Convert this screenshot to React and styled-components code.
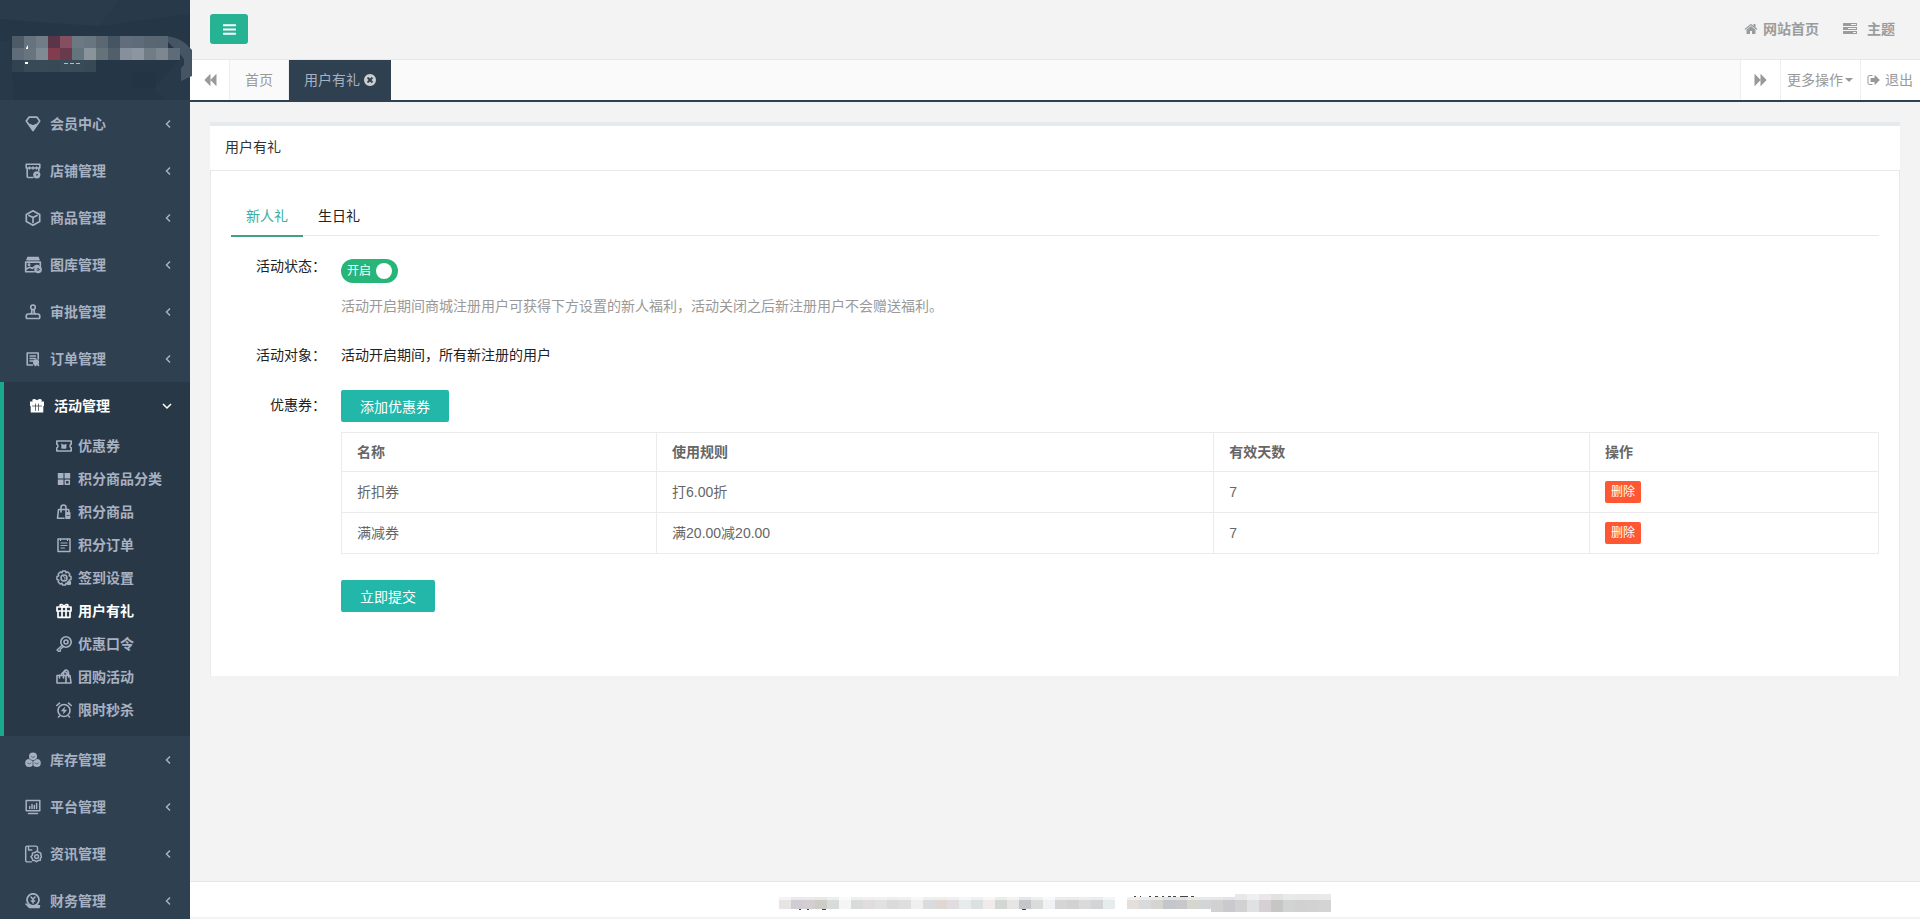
import React, { useState } from "react";
import styled, { createGlobalStyle, css } from "styled-components";

const GlobalStyle = createGlobalStyle`
  *, *::before, *::after { box-sizing: border-box; }
  html, body { margin: 0; padding: 0; }
  body {
    background: #f3f3f4;
    color: #333;
    font-family: "Liberation Sans", "Noto Sans CJK SC", sans-serif;
    font-size: 14px;
    line-height: 20px;
  }
  button, input { font: inherit; }
  button { cursor: pointer; }
  a { color: inherit; text-decoration: none; }
`;

/* ---------- icons ---------- */

const Svg = styled.svg`
  display: block;
  flex: none;
  width: ${(p) => p.$size || 16}px;
  height: ${(p) => p.$size || 16}px;
`;

const Line = ({ size, children }) => (
  <Svg
    $size={size}
    viewBox="0 0 16 16"
    fill="none"
    stroke="currentColor"
    strokeWidth="1.6"
    strokeLinejoin="round"
    strokeLinecap="round"
    aria-hidden="true"
  >
    {children}
  </Svg>
);

const Solid = ({ size, d }) => (
  <Svg $size={size} viewBox="0 0 1792 1792" fill="currentColor" aria-hidden="true">
    <path d={d} />
  </Svg>
);

const SOLID = {
  bars: "M1664 1344v128q0 26-19 45t-45 19h-1408q-26 0-45-19t-19-45v-128q0-26 19-45t45-19h1408q26 0 45 19t19 45zm0-512v128q0 26-19 45t-45 19h-1408q-26 0-45-19t-19-45v-128q0-26 19-45t45-19h1408q26 0 45 19t19 45zm0-512v128q0 26-19 45t-45 19h-1408q-26 0-45-19t-19-45v-128q0-26 19-45t45-19h1408q26 0 45 19t19 45z",
  backward:
    "M1683 141q19-19 32-13t13 32v1472q0 26-13 32t-32-13l-710-710q-9-9-13-19v710q0 26-13 32t-32-13l-710-710q-19-19-19-45t19-45l710-710q19-19 32-13t13 32v710q4-10 13-19z",
  forward:
    "M109 1651q-19 19-32 13t-13-32v-1472q0-26 13-32t32 13l710 710q9 9 13 19v-710q0-26 13-32t32 13l710 710q19 19 19 45t-19 45l-710 710q-19 19-32 13t-13-32v-710q-4 10-13 19z",
  home: "M1472 992v480q0 26-19 45t-45 19h-384v-384h-256v384h-384q-26 0-45-19t-19-45v-480q0-1 .5-3t.5-3l575-474 575 474q1 2 1 6zm223-69l-62 74q-8 9-21 11h-3q-13 0-21-7l-692-577-692 577q-12 8-24 7-13-2-21-11l-62-74q-8-10-7-23.5t11-21.5l719-599q32-26 76-26t76 26l244 204v-195q0-14 9-23t23-9h192q14 0 23 9t9 23v408l219 182q10 8 11 21.5t-7 23.5z",
  signOut:
    "M704 1440q0 4 1 20t.5 26.5-3 23.5-10 19.5-20.5 6.5h-320q-119 0-203.5-84.5t-84.5-203.5v-704q0-119 84.5-203.5t203.5-84.5h320q13 0 22.5 9.5t9.5 22.5q0 4 1 20t.5 26.5-3 23.5-10 19.5-20.5 6.5h-320q-66 0-113 47t-47 113v704q0 66 47 113t113 47h312l11.5 1 11.5 3 8 5.5 7 9 2 13.5zm928-544q0 26-19 45l-544 544q-19 19-45 19t-45-19-19-45v-288h-448q-26 0-45-19t-19-45v-384q0-26 19-45t45-19h448v-288q0-26 19-45t45-19 45 19l544 544q19 19 19 45z",
  timesCircle:
    "M1277 1122q0-26-19-45l-181-181 181-181q19-19 19-45 0-27-19-46l-90-90q-19-19-46-19-26 0-45 19l-181 181-181-181q-19-19-45-19-27 0-46 19l-90 90q-19 19-19 46 0 26 19 45l181 181-181 181q-19 19-19 45 0 27 19 46l90 90q19 19 46 19 26 0 45-19l181-181 181 181q19 19 45 19 27 0 46-19l90-90q19-19 19-46zm387-226q0 209-103 385.5t-279.5 279.5-385.5 103-385.5-103-279.5-279.5-103-385.5 103-385.5 279.5-279.5 385.5-103 385.5 103 279.5 279.5 103 385.5z",
};

const TasksIcon = () => (
  <Svg $size={14} viewBox="0 0 14 14" fill="currentColor" aria-hidden="true">
    <path
      fillRule="evenodd"
      d="M.5 1h13q.5 0 .5.5v2q0 .5-.5.5H.5Q0 4 0 3.500v-2Q0 1 .5 1zM8 2v1h5V2zM.5 5h13q.5 0 .5.5v2q0 .5-.5.5H.5Q0 8 0 7.500v-2Q0 5 .5 5zM5 6v1h8V6zM.5 9h13q.5 0 .5.5v2q0 .5-.5.500H.5Q0 12 0 11.500v-2Q0 9 .5 9zM10 10v1h3v-1z"
    />
  </Svg>
);

const GemIcon = () => (
  <Line>
    <path d="M4 1.200h8L14.700 5 8 14.500 1.300 5z" strokeWidth="1.700" />
    <path d="M4.500 8.500L8 10l3.500-1.500L8 13.500z" fill="currentColor" />
  </Line>
);
const ShopIcon = () => (
  <Line>
    <path d="M1.200 1.200h13.600V5H1.200zM2.200 6v7.500q0 1 1 1H8M13.800 6v2" />
    <path d="M4.500 4v2M8 4v2M11.500 4v2" />
    <circle cx="11.800" cy="11.800" r="2.800" fill="currentColor" />
    <circle cx="11.800" cy="11.800" r=".6" stroke="#2f4050" strokeWidth=".7" />
  </Line>
);
const CubeIcon = () => (
  <Line>
    <path d="M8 .8l6.700 3.700v7L8 15.200l-6.700-3.700v-7zM4 5.500L8 7.500l4-2M8 7.500v5" strokeWidth="1.700" />
  </Line>
);
const GalleryIcon = () => (
  <Line size={18}>
    <path d="M3.500 1.500h9M2.800 3.200h10.400" strokeWidth="1.800" />
    <path d="M9 14H1.500V5.500h13V9M2 11.500l3-1.500 2.500 1 3-2.500h2" strokeWidth="1.500" />
    <circle cx="4.500" cy="7.800" r=".5" fill="currentColor" />
    <circle cx="12.500" cy="12" r="2.600" fill="currentColor" />
    <circle cx="12.500" cy="12" r="1" stroke="#2f4050" strokeWidth=".7" />
  </Line>
);
const StampIcon = () => (
  <Line>
    <circle cx="8" cy="3.300" r="2.300" />
    <path d="M6.800 5.500v3L5.500 10M9.200 5.500v3l1.300 1.500M1.200 12.500q0-2.500 2-2.500h9.600q2 0 2 2.500 0 2-1 2H2.200q-1 0-1-2z" strokeWidth="1.700" />
  </Line>
);
const OrderIcon = () => (
  <Line>
    <path d="M7.500 14H2.200V2h11v6M5 5h5.500M5 7.500h5.500M5 10h3" />
    <circle cx="11" cy="11.300" r="2.300" fill="currentColor" />
    <path d="M9.500 13l1 1.500M12.500 13l1 1.500" />
  </Line>
);
const GiftSolidIcon = () => (
  <Line>
    <path d="M1 3.500h14V8h-.7v6.500H1.700V8H1z" fill="currentColor" stroke="none" />
    <path d="M7.500 4C5.500 4 4 3.500 4 2.500S6.500 1 8 3.500C9.500 1 12 1.500 12 2.500S10.500 4 8.500 4" fill="currentColor" />
    <path d="M6.500 6v6.500M9.500 6v6.500M3.500 8h9" stroke="#293846" strokeWidth=".7" />
  </Line>
);
const TicketIcon = () => (
  <Line>
    <path d="M.8 3h14.400v3.200c-1.500.3-1.500 3.300 0 3.600V13H.8V9.800c1.500-.3 1.500-3.300 0-3.600z" />
    <path d="M6 6l1 1h2l1-1v4.300H6z" fill="currentColor" strokeWidth=".8" />
  </Line>
);
const GridIcon = () => (
  <Line>
    <path d="M1.800 2h5.700v5.500H1.800zM8.500 2h5.700v5.500H8.500zM1.800 8.500h5.700V14H1.800z" fill="currentColor" stroke="none" />
    <path d="M9.300 9.300h4v4h-4z" strokeWidth="1.500" />
  </Line>
);
const BagIcon = () => (
  <Line>
    <path d="M8 14.300H1.500L2.500 5.500h10l.5 2M5 8V3.500q0-2.500 2.500-2.500T10 3.500V8" />
    <path d="M10 8.700h3.700v5.500H10z" fill="currentColor" />
    <path d="M11 11.500h2" stroke="#293846" strokeWidth=".7" />
  </Line>
);
const ListIcon = () => (
  <Line>
    <path d="M2 2h12v12.500H2z" strokeWidth="1.500" />
    <path d="M4.500 2v1.500M11.500 2v1.500M5 6h6M5 8.500h6M5 11h3.500" strokeWidth="1.200" />
  </Line>
);
const GearIcon = () => (
  <Line>
    <path
      d="M6.500 1h3l.5 1.700 1.800-.7 2 2-.6 1.800 1.800.7v3l-1.800.6.6 1.900-2 2-1.800-.7-.5 1.700h-3L6 13.300l-1.800.7-2-2 .6-1.900L1 9.500v-3l1.800-.7L2.200 4l2-2 1.800.7z"
      strokeWidth="1.500"
    />
    <circle cx="8" cy="8" r="3" />
    <path d="M7.500 6.500l2 1.500-1.500 1.500" strokeWidth="1" />
    <circle cx="13" cy="13" r="1.500" fill="currentColor" />
  </Line>
);
const GiftIcon = () => (
  <Line>
    <path d="M1 4h14v4H1zM2 8h12v6.300H2zM6 4v10M10 4v10" strokeWidth="1.700" />
    <path d="M8 4C6 4 4 3.500 4 2.300S6.500 1 8 3.500C9.500 1 12 1 12 2.300S10 4 8 4" />
  </Line>
);
const KeyIcon = () => (
  <Line>
    <circle cx="10" cy="6" r="5.200" />
    <circle cx="10" cy="6" r="2" />
    <path d="M6 9.500L1 14l1.500 1.300h1.700V13.500L7.500 10.500" strokeWidth="1.400" />
  </Line>
);
const BagsIcon = () => (
  <Line>
    <path d="M1 6.500h9V14H1zM10 6l4 .5 1 7.500H10M5.500 5L8.500 2l3.500 3.500M3.500 9V6M7.500 9V5Q8 1 10 1t2.500 3v4" />
  </Line>
);
const AlarmIcon = () => (
  <Line>
    <circle cx="8" cy="8.500" r="6" />
    <path d="M.8 3.500L3.500 1.200M15.200 3.500l-2.700-2.300M3.500 14L2.500 15M12.500 14l1 1" />
    <path d="M8.500 5.500L5.500 9H8l-.5 2.500L10.500 8H8z" fill="currentColor" strokeWidth=".7" />
  </Line>
);
const StockIcon = () => (
  <Line>
    <g fill="currentColor" stroke="none">
      <circle cx="8" cy="4.400" r="4" />
      <circle cx="4.200" cy="11" r="4" />
      <circle cx="11.800" cy="11" r="4" />
    </g>
    <g stroke="#2f4050" strokeWidth=".6">
      <path d="M6.300 4.500L8 5.500l1.700-1M2.500 11l1.700 1 1.700-1M10 11l1.800 1 1.700-1M8 8.500v4M4.800 7.400L8 8.800l3.200-1.400" />
    </g>
  </Line>
);
const MonitorIcon = () => (
  <Line>
    <path d="M1.200 1.500h13.600v10.300H1.200zM3.500 14.500h9M4.700 9.500V7.500M7 9.500v-4M9.300 9.500v-3M11.600 9.500v-5" strokeWidth="1.500" />
  </Line>
);
const NewsIcon = () => (
  <Line size={18}>
    <path d="M6.500 15H3q-1.500 0-1.500-1.500V2.500Q1.500 1 3 1h7.500q1.500 0 1.500 1.500V5M4 1v3.500h3" strokeWidth="1.300" />
    <path d="M10 6.500l1.500-1 1.500 1 2 .7v2l.7 1.300-1.200 1.500v1.500l-2 .3-1.500 1-1.500-1H7.800l-.6-2-1-1.300L7.500 9V7.200z" strokeWidth="1.300" />
    <circle cx="11.200" cy="10.300" r="1.700" strokeWidth="1.300" />
  </Line>
);
const MoneyIcon = () => (
  <Line>
    <circle cx="8" cy="6.800" r="6" strokeWidth="1.800" />
    <path d="M6 4l2 2.300L10 4M8 6.300V10M6.300 8h3.400" strokeWidth="1.500" />
    <path d="M1 11l3.500 3.500H14L14.500 12.800H9" fill="currentColor" />
  </Line>
);

const Chevron = ({ open }) => (
  <Svg
    $size={10}
    viewBox="0 0 10 10"
    fill="none"
    stroke="currentColor"
    strokeWidth="1.500"
    aria-hidden="true"
  >
    <path d={open ? "M1 3l4 4 4-4" : "M8 1.500L4.500 5 8 8.500"} />
  </Svg>
);

/* ---------- sidebar ---------- */

const Shell = styled.div`
  display: flex;
  height: 100vh;
  overflow: hidden;
`;

const Sidebar = styled.aside`
  flex: none;
  width: 190px;
  background: #2f4050;
  color: #a7b1c2;
  position: relative;
  z-index: 1;
`;

const SidebarScroll = styled.nav`
  height: calc(100vh - 100px);
  overflow-y: auto;
  scrollbar-width: none;
`;

const Brand = styled.svg`
  display: block;
  width: 190px;
  height: 100px;
  overflow: visible;
`;

const Group = styled.div`
  ${(p) =>
    p.$open &&
    css`
      background: #293846;
      border-left: 4px solid #19aa8d;
      padding-bottom: 10px;
    `}
`;

const MenuLink = styled.a`
  display: flex;
  align-items: center;
  height: 47px;
  padding: 0 18px 0 24px;
  font-weight: 600;
  color: ${(p) => (p.$active ? "#fff" : "#a7b1c2")};
`;

const MenuIcon = styled.span`
  display: flex;
  justify-content: center;
  width: 18px;
  margin-right: 8px;
`;

const MenuText = styled.span`
  flex: 1;
`;

const SubLink = styled.a`
  display: flex;
  align-items: center;
  gap: 6px;
  height: 33px;
  padding-left: 52px;
  font-weight: 600;
  color: ${(p) => (p.$active ? "#fff" : "#a7b1c2")};
`;

const BRAND_ROWS = [
  ["#4d5b69", "#66737e", "#707d86", "#5a3547", "#854f60", "#6b7983", "#687680", "#5b6873", "#455564", "#616d7b", "#5e6b78", "#5a6773", "#586572"],
  ["#606c7a", "#68757f", "#808a94", "#813d4d", "#683a4b", "#64747c", "#88939a", "#65727a", "#505f6b", "#86909c", "#8c96a1", "#707d87", "#7d8790", "#5e6b78"],
  ["#304351", "#384a57", "#384a57", "#364956", "#3a4c59", "#3a4b58", "#384955"],
];

const BrandArt = () => (
  <Brand viewBox="0 0 190 100" role="img" aria-label="logo">
    <rect width="190" height="100" fill="#253747" />
    <path d="M0 0h120l-20 26L50 23 0 19z" fill="#2a3b4b" />
    <path d="M120 0h70v14l-90 12z" fill="#283a4a" />
    <path d="M0 42l10-2 4 60H0z" fill="#28394a" />
    <path d="M154 88l36-40v52h-26z" fill="#283a4a" />
    <path d="M132 72h24v16h-24z" fill="#233545" />
    <path d="M162 36q18 0 28 12l2 2v26l-11 5V68l3-3v-6l-4-5z" fill="#465564" />
    {BRAND_ROWS.map((row, y) =>
      row.map((fill, x) => (
        <rect key={`${y}-${x}`} x={12 + x * 12} y={36 + y * 12} width="12" height="12" fill={fill} />
      ))
    )}
    <path d="M26 48l2-3v4h-2zM25 62h3v2h-3z" fill="#fff" />
    <path d="M64 63.500h17" stroke="#b5bdc0" strokeDasharray="4 2" />
  </Brand>
);

const MENU = [
  { text: "会员中心", Icon: GemIcon },
  { text: "店铺管理", Icon: ShopIcon },
  { text: "商品管理", Icon: CubeIcon },
  { text: "图库管理", Icon: GalleryIcon },
  { text: "审批管理", Icon: StampIcon },
  { text: "订单管理", Icon: OrderIcon },
  {
    text: "活动管理",
    Icon: GiftSolidIcon,
    children: [
      { text: "优惠券", Icon: TicketIcon },
      { text: "积分商品分类", Icon: GridIcon },
      { text: "积分商品", Icon: BagIcon },
      { text: "积分订单", Icon: ListIcon },
      { text: "签到设置", Icon: GearIcon },
      { text: "用户有礼", Icon: GiftIcon, active: true },
      { text: "优惠口令", Icon: KeyIcon },
      { text: "团购活动", Icon: BagsIcon },
      { text: "限时秒杀", Icon: AlarmIcon },
    ],
  },
  { text: "库存管理", Icon: StockIcon },
  { text: "平台管理", Icon: MonitorIcon },
  { text: "资讯管理", Icon: NewsIcon },
  { text: "财务管理", Icon: MoneyIcon },
];

/* ---------- top area ---------- */

const Main = styled.div`
  flex: 1;
  min-width: 0;
  display: flex;
  flex-direction: column;
  background: #f3f3f3;
`;

const TopBar = styled.header`
  flex: none;
  display: flex;
  align-items: center;
  justify-content: space-between;
  height: 60px;
  padding: 0 25px 1px 20px;
  border-bottom: 1px solid #e7e7e7;
`;

const MenuToggle = styled.button`
  display: flex;
  align-items: center;
  justify-content: center;
  width: 38px;
  height: 30px;
  padding: 0;
  border: 0;
  border-radius: 3px;
  background: #26b394;
  color: #fff;
`;

const TopLinks = styled.div`
  display: flex;
  gap: 24px;
`;

const TopLink = styled.a`
  display: flex;
  align-items: center;
  gap: ${(p) => p.$gap}px;
  color: #999c9e;
  font-weight: 600;
`;

const TabBar = styled.div`
  flex: none;
  display: flex;
  height: 42px;
  background: #fafafa;
  border-bottom: 2px solid #2f4050;
  color: #999;
`;

const barItem = css`
  display: flex;
  align-items: center;
  justify-content: center;
  height: 40px;
  border: 0;
  color: #999;
`;

const ScrollButton = styled.button`
  ${barItem}
  width: 40px;
  padding: 0;
  background: #fff;
  border-${(p) => p.$side}: 1px solid #eee;
`;

const PageTabs = styled.div`
  flex: 1;
  display: flex;
`;

const PageTab = styled.a`
  ${barItem}
  gap: 4px;
  padding: 0 15px;
  ${(p) =>
    p.$active
      ? css`
          background: #2f4050;
          color: #a7b1c2;
        `
      : css`
          border-right: 1px solid #eee;
        `}
`;

const CloseButton = styled.button`
  display: flex;
  justify-content: center;
  width: 12px;
  padding: 0;
  border: 0;
  background: none;
  color: #ccc;
`;

const BarAction = styled.button`
  ${barItem}
  gap: ${(p) => p.$gap}px;
  padding: 0 7px 0 6px;
  background: #fff;
  border-left: 1px solid #eee;
`;

const Caret = styled.span`
  border: 4px solid transparent;
  border-top-color: currentColor;
  border-bottom: 0;
`;

/* ---------- content ---------- */

const Content = styled.main`
  flex: 1;
  min-height: 0;
  overflow: auto;
  padding: 20px;
`;

const Card = styled.section`
  background: #fff;
  border-top: 4px solid #e7eaec;
`;

const CardTitle = styled.h1`
  margin: 0;
  padding: 11px 15px 13px;
  font-size: 14px;
  font-weight: 400;
  line-height: 20px;
`;

const CardBody = styled.div`
  padding: 25px 20px 64px;
  border: 1px solid #e7eaec;
  border-bottom: 0;
`;

const InnerTabs = styled.div`
  display: flex;
  height: 40px;
  border-bottom: 1px solid #e8e8e8;
`;

const InnerTab = styled.button`
  height: 41px;
  padding: 0 15px;
  border: 0;
  border-bottom: 2px solid ${(p) => (p.$active ? "#459f7f" : "transparent")};
  background: none;
  color: ${(p) => (p.$active ? "#3aae9c" : "#222")};
`;

const Form = styled.form`
  display: flex;
  flex-direction: column;
  gap: 20px;
  padding-top: 15px;
  color: #222;
`;

const FormRow = styled.div`
  display: grid;
  grid-template-columns: 110px minmax(0, 1fr);
`;

const RowLabel = styled.label`
  padding: 5px 15px 5px 0;
  text-align: right;
`;

const Control = styled.div`
  grid-column: 2;
  display: flex;
  flex-direction: column;
  align-items: flex-start;
  padding: ${(p) => p.$pad || "0"};
`;

const Switch = styled.span`
  position: relative;
  display: flex;
  align-items: center;
  justify-content: space-between;
  flex-direction: ${(p) => (p.$on ? "row" : "row-reverse")};
  width: 57px;
  height: 24px;
  padding: 0 6px;
  border-radius: 12px;
  background: ${(p) => (p.$on ? "#27b57a" : "#bbb")};
  color: #fff;
  font-size: 12px;
`;

const SwitchInput = styled.input`
  position: absolute;
  inset: 0;
  width: 100%;
  height: 100%;
  margin: 0;
  opacity: 0;
  cursor: pointer;
`;

const Knob = styled.span`
  width: 16px;
  height: 16px;
  border-radius: 50%;
  background: #fff;
`;

const Hint = styled.p`
  margin: 13px 0 0;
  color: #999;
`;

const PrimaryButton = styled.button`
  height: 32px;
  padding: 1px 19px 0;
  border: 0;
  border-radius: 2px;
  background: #23b7aa;
  color: #fff;
`;

const DeleteButton = styled.button`
  display: block;
  height: 22px;
  padding: 0 6px;
  border: 0;
  border-radius: 2px;
  background: #ff5733;
  color: #fff;
  font-size: 12px;
  line-height: 22px;
`;

const Table = styled.table`
  width: 100%;
  margin-top: 10px;
  border-collapse: collapse;
  table-layout: fixed;
  color: #666;

  th,
  td {
    height: 41px;
    padding: 0 15px;
    border: 1px solid #ebebeb;
    text-align: left;
  }
  th {
    height: 39px;
    font-weight: 600;
  }
`;

const Col = styled.col`
  width: ${(p) => p.$width};
`;

const Footer = styled.footer`
  flex: none;
  display: flex;
  justify-content: center;
  height: 36px;
  margin-bottom: 2px;
  padding-top: 12px;
  background: #fff;
  border-top: 1px solid #e7e7e7;
`;

const FooterArt = styled.svg`
  display: block;
  width: 552px;
  height: 20px;
`;

const FOOT_A = "e9e4e4 d0ccd3 d3cecf cccdc7 d7dbd9 f5f5f5 d8dbda e1dcdd e1e1e2 d9dadc dfdddd eeefee dadbdc ded7d2 dfdde0 e8ebeb dbe1e1 efebeb d3d7d4 e6e5e4 c3c7ca dadcdb f0f1f4 d5d5d6 d2d2d2 dadadb d2d4d6 e6ebeb".split(" ");
const FOOT_B = "e4dfdb d8dadc d4d5d0 c3c7cb c9c7ca d5d6cf d2d5d5 d2d1d2 cac9cd d2d1d2 dfe1e3 d6d0d5 c6c7c4 d2d4d3 d2d1d1 d3d2d2 d4d4d5".split(" ");

const FooterMark = () => (
  <FooterArt viewBox="0 0 552 20" aria-hidden="true">
    {FOOT_A.map((c, i) => (
      <g key={i} fill={`#${c}`}>
        <rect x={i * 12} y="3" width="12" height="3" opacity=".45" />
        <rect x={i * 12} y="6" width="12" height="9" />
      </g>
    ))}
    {FOOT_B.map((c, i) => (
      <g key={i} fill={`#${c}`}>
        <rect x={348 + i * 12} y={i > 8 ? 0 : 3} width="12" height={i > 8 ? 6 : 3} opacity=".5" />
        <rect x={348 + i * 12} y="6" width="12" height={i > 6 ? 12 : 9} />
      </g>
    ))}
    <path d="M20 15.500h2M28 15.500h2M43 15.500h4M243 15.500h4M355 2.500h2M361 2.500h1M370 2.500h2M376 2.500h3M383 2.500h2M389 2.500h3M394 2.500h3M401 2.500h8M412 2.500h3" stroke="#444" />
  </FooterArt>
);

const ROWS = [
  { name: "折扣券", rule: "打6.00折", days: 7 },
  { name: "满减券", rule: "满20.00减20.00", days: 7 },
];

export default function App() {
  const [enabled, setEnabled] = useState(true);
  const [tab, setTab] = useState("新人礼");

  return (
    <>
      <GlobalStyle />
      <Shell>
        <Sidebar>
          <BrandArt />
          <SidebarScroll>
            {MENU.map(({ text, Icon, children }) => (
              <Group key={text} $open={!!children}>
                <MenuLink href="#" $active={!!children}>
                  <MenuIcon>
                    <Icon />
                  </MenuIcon>
                  <MenuText>{text}</MenuText>
                  <Chevron open={!!children} />
                </MenuLink>
                {children?.map((c) => (
                  <SubLink key={c.text} href="#" $active={c.active}>
                    <c.Icon />
                    {c.text}
                  </SubLink>
                ))}
              </Group>
            ))}
          </SidebarScroll>
        </Sidebar>

        <Main>
          <TopBar>
            <MenuToggle type="button" aria-label="菜单">
              <Solid size={15} d={SOLID.bars} />
            </MenuToggle>
            <TopLinks>
              <TopLink href="#" $gap={5}>
                <Solid size={14} d={SOLID.home} />
                网站首页
              </TopLink>
              <TopLink href="#" $gap={10}>
                <TasksIcon />
                主题
              </TopLink>
            </TopLinks>
          </TopBar>

          <TabBar>
            <ScrollButton type="button" $side="right" aria-label="向左">
              <Solid size={14} d={SOLID.backward} />
            </ScrollButton>
            <PageTabs>
              <PageTab href="#">首页</PageTab>
              <PageTab as="div" $active>
                用户有礼
                <CloseButton type="button" aria-label="关闭">
                  <Solid size={14} d={SOLID.timesCircle} />
                </CloseButton>
              </PageTab>
            </PageTabs>
            <ScrollButton type="button" $side="left" aria-label="向右">
              <Solid size={14} d={SOLID.forward} />
            </ScrollButton>
            <BarAction type="button" $gap={2}>
              更多操作
              <Caret />
            </BarAction>
            <BarAction type="button" $gap={4}>
              <Solid size={14} d={SOLID.signOut} />
              退出
            </BarAction>
          </TabBar>

          <Content>
            <Card>
              <CardTitle>用户有礼</CardTitle>
              <CardBody>
                <InnerTabs role="tablist">
                  {["新人礼", "生日礼"].map((t) => (
                    <InnerTab
                      key={t}
                      type="button"
                      role="tab"
                      aria-selected={tab === t}
                      $active={tab === t}
                      onClick={() => setTab(t)}
                    >
                      {t}
                    </InnerTab>
                  ))}
                </InnerTabs>

                <Form onSubmit={(e) => e.preventDefault()}>
                  <FormRow>
                    <RowLabel htmlFor="status">活动状态：</RowLabel>
                    <Control $pad="8px 0 4px">
                      <Switch $on={enabled}>
                        <SwitchInput
                          id="status"
                          type="checkbox"
                          role="switch"
                          checked={enabled}
                          onChange={(e) => setEnabled(e.target.checked)}
                        />
                        {enabled ? "开启" : "关闭"}
                        <Knob />
                      </Switch>
                      <Hint>活动开启期间商城注册用户可获得下方设置的新人福利，活动关闭之后新注册用户不会赠送福利。</Hint>
                    </Control>
                  </FormRow>

                  <FormRow>
                    <RowLabel as="span">活动对象：</RowLabel>
                    <Control $pad="5px 0">活动开启期间，所有新注册的用户</Control>
                  </FormRow>

                  <FormRow>
                    <RowLabel htmlFor="add-coupon">优惠券：</RowLabel>
                    <Control>
                      <PrimaryButton id="add-coupon" type="button">
                        添加优惠券
                      </PrimaryButton>
                      <Table>
                        <colgroup>
                          <Col $width="20.5%" />
                          <Col $width="36.25%" />
                          <Col $width="24.45%" />
                          <Col />
                        </colgroup>
                        <thead>
                          <tr>
                            <th>名称</th>
                            <th>使用规则</th>
                            <th>有效天数</th>
                            <th>操作</th>
                          </tr>
                        </thead>
                        <tbody>
                          {ROWS.map((r) => (
                            <tr key={r.name}>
                              <td>{r.name}</td>
                              <td>{r.rule}</td>
                              <td>{r.days}</td>
                              <td>
                                <DeleteButton type="button">删除</DeleteButton>
                              </td>
                            </tr>
                          ))}
                        </tbody>
                      </Table>
                    </Control>
                  </FormRow>

                  <FormRow>
                    <Control $pad="6px 0 0">
                      <PrimaryButton type="submit">立即提交</PrimaryButton>
                    </Control>
                  </FormRow>
                </Form>
              </CardBody>
            </Card>
          </Content>

          <Footer>
            <FooterMark />
          </Footer>
        </Main>
      </Shell>
    </>
  );
}
